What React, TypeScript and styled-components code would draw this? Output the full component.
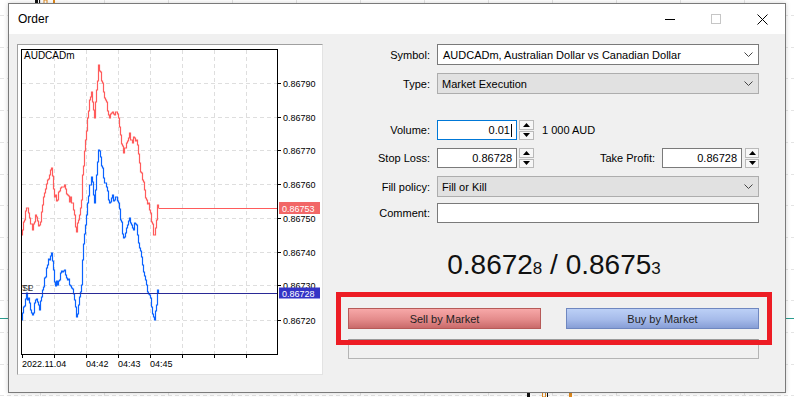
import styled, { createGlobalStyle } from 'styled-components';

const GlobalStyle = createGlobalStyle`
  body {
    margin: 0;
    font-family: 'Liberation Sans', Arial, sans-serif;
    background: #ffffff;
  }
`;

const Desktop = styled.div`
  position: relative;
  width: 794px;
  height: 397px;
  overflow: hidden;
  background: #ffffff;
`;

const Backdrop = styled.svg`
  position: absolute;
  left: 0;
  top: 0;
`;

const Window = styled.div`
  position: absolute;
  left: 8px;
  top: 3px;
  width: 778px;
  height: 390px;
  box-sizing: border-box;
  border: 1px solid #7a7a7a;
  background: #f0f0f0;
  display: flex;
  flex-direction: column;
  box-shadow: 0 0 5px rgba(0, 0, 0, 0.18);
`;

const TitleBar = styled.div`
  height: 30px;
  background: #ffffff;
  display: flex;
  align-items: center;
`;

const Title = styled.div`
  padding-left: 9px;
  font-size: 12px;
  color: #000;
`;

const WindowButtons = styled.div`
  margin-left: auto;
  display: flex;
`;

const WinButton = styled.div`
  width: 46px;
  height: 30px;
  display: flex;
  align-items: center;
  justify-content: center;
`;

const Body = styled.div`
  flex: 1;
  display: flex;
  align-items: flex-start;
  padding: 10px 12px 0 8px;
`;

const ChartPanel = styled.div`
  width: 306px;
  height: 331px;
  box-sizing: border-box;
  background: #ffffff;
  border-top: 1px solid #a0a0a0;
  border-left: 1px solid #a0a0a0;
  border-right: 1px solid #e3e3e3;
  border-bottom: 1px solid #e3e3e3;
  svg {
    display: block;
  }
`;

const FormColumn = styled.div`
  width: 436px;
  margin-left: 13px;
  display: flex;
  flex-direction: column;
  font-size: 11px;
  color: #000;
`;

const FieldRow = styled.div<{ $h: number; $mt: number }>`
  display: grid;
  grid-template-columns: 94px 322px;
  column-gap: 7px;
  height: ${(p) => p.$h}px;
  margin-top: ${(p) => p.$mt}px;
  align-items: center;
`;

const FieldLabel = styled.div`
  text-align: right;
  white-space: nowrap;
`;

const Select = styled.div<{ $variant: 'white' | 'gray' }>`
  height: 100%;
  box-sizing: border-box;
  display: flex;
  align-items: center;
  padding: 0 5px 0 ${(p) => (p.$variant === 'white' ? 5 : 4)}px;
  border: 1px solid ${(p) => (p.$variant === 'white' ? '#7a7a7a' : '#adadad')};
  background: ${(p) => (p.$variant === 'white' ? '#ffffff' : '#e1e1e1')};
  span {
    flex: 1;
  }
`;

const Controls = styled.div`
  display: flex;
  align-items: center;
  height: 100%;
`;

const NumberInput = styled.div<{ $focused?: boolean }>`
  width: 80px;
  height: 20px;
  box-sizing: border-box;
  border: 1px solid ${(p) => (p.$focused ? '#0078d7' : '#7a7a7a')};
  background: #ffffff;
  display: flex;
  align-items: center;
  justify-content: flex-end;
  padding-right: 4px;
`;

const Caret = styled.span`
  display: inline-block;
  width: 1px;
  height: 13px;
  background: #000;
  margin-left: 1px;
`;

const Spinner = styled.div<{ $ml: number; $w: number }>`
  width: ${(p) => p.$w}px;
  height: 20px;
  margin-left: ${(p) => p.$ml}px;
  display: flex;
  flex-direction: column;
  gap: 1px;
`;

const SpinHalf = styled.div`
  flex: 1;
  box-sizing: border-box;
  border: 1px solid #b9b9b9;
  background: #f7f7f7;
  display: flex;
  align-items: center;
  justify-content: center;
`;

const Unit = styled.span`
  margin-left: 8px;
`;

const InlineLabel = styled.span`
  margin-left: auto;
  margin-right: 7px;
`;

const TextInput = styled.div`
  height: 100%;
  box-sizing: border-box;
  border: 1px solid #7a7a7a;
  background: #ffffff;
`;

const PriceQuote = styled.div`
  margin-top: 26px;
  height: 32px;
  line-height: 32px;
  text-align: center;
  font-size: 28px;
  color: #111;
  white-space: nowrap;
  small {
    font-size: 17px;
  }
`;

const ActionArea = styled.div`
  position: relative;
  margin-top: 11px;
  height: 67px;
`;

const ButtonRow = styled.div`
  display: flex;
  justify-content: space-between;
  padding: 16px 13px 0 12px;
`;

const OrderButton = styled.div<{ $side: 'sell' | 'buy' }>`
  width: 193px;
  height: 21px;
  box-sizing: border-box;
  display: flex;
  align-items: center;
  justify-content: center;
  font-size: 11px;
  color: #1f1f1f;
  border: 1px solid ${(p) => (p.$side === 'sell' ? '#b65a58' : '#6f87c0')};
  background: ${(p) =>
    p.$side === 'sell'
      ? 'linear-gradient(#f7a8a8, #e48b8b 55%, #c96a6a)'
      : 'linear-gradient(#bcd0f6, #a6bbea 55%, #879ed6)'};
`;

const StatusBox = styled.div`
  margin: 10px 13px 0 12px;
  height: 20px;
  box-sizing: border-box;
  border: 1px solid #b4b4b4;
  border-top-color: #9a9a9a;
`;

const Highlight = styled.div`
  position: absolute;
  left: 0;
  top: 0;
  right: 0;
  height: 53px;
  box-sizing: border-box;
  border: 5px solid #ed1c24;
  pointer-events: none;
`;

const Chevron = () => (
  <svg width="9" height="5" viewBox="0 0 9 5">
    <polyline points="0.5,0.5 4.5,4.5 8.5,0.5" fill="none" stroke="#444" strokeWidth="1" />
  </svg>
);

const Arrow = ({ up }: { up?: boolean }) => (
  <svg width="7" height="4" viewBox="0 0 7 4">
    <polygon points={up ? '3.5,0 7,4 0,4' : '0,0 7,0 3.5,4'} fill="#000" />
  </svg>
);

const SpinBox = ({ ml, w }: { ml: number; w: number }) => (
  <Spinner $ml={ml} $w={w}>
    <SpinHalf>
      <Arrow up />
    </SpinHalf>
    <SpinHalf>
      <Arrow />
    </SpinHalf>
  </Spinner>
);

// ask price path, key points in page pixels; bid is the same shape 85px lower
const askKeys: [number, number][] = [
  [22, 235], [24, 222], [27, 208], [30, 218], [33, 230], [36, 215], [40, 225], [43, 205],
  [45, 193], [48, 180], [50, 175], [52, 168], [53, 176], [55, 197], [58, 200], [61, 188],
  [65, 185], [68, 195], [72, 203], [75, 215], [77, 232], [79, 220], [82, 200], [83, 175],
  [86, 140], [88, 118], [90, 100], [92, 92], [94, 110], [95, 118], [97, 90], [99, 65],
  [101, 72], [103, 83], [105, 98], [107, 102], [109, 115], [110, 118], [112, 113], [115, 115],
  [117, 112], [119, 118], [121, 135], [124, 153], [126, 148], [127, 143], [130, 133],
  [132, 140], [133, 143], [135, 138], [137, 140], [140, 163], [143, 180], [147, 200],
  [150, 210], [152, 222], [155, 235], [157, 220], [158, 205], [159, 208],
];

// stair-step tick line: each tick moves one pixel right, then jumps vertically
const buildSeries = (offset: number, seed: number) => {
  let s = seed;
  const rnd = () => {
    s = (s * 9301 + 49297) % 233280;
    return s / 233280;
  };
  const pts: string[] = [];
  let prevY = askKeys[0][1] + offset;
  pts.push(`${askKeys[0][0]},${prevY}`);
  for (let i = 0; i < askKeys.length - 1; i++) {
    const [x0, y0] = askKeys[i];
    const [x1, y1] = askKeys[i + 1];
    const steps = Math.max(1, Math.round(x1 - x0));
    for (let k = 1; k <= steps; k++) {
      const t = k / steps;
      const x = x0 + (x1 - x0) * t;
      const jitter = k === steps ? 0 : Math.round((rnd() - 0.5) * 8);
      const y = Math.round(y0 + (y1 - y0) * t + jitter + offset);
      pts.push(`${(x - 0.5).toFixed(1)},${prevY}`);
      pts.push(`${(x - 0.5).toFixed(1)},${y}`);
      pts.push(`${x.toFixed(1)},${y}`);
      prevY = y;
    }
  }
  return pts.join(' ');
};

const priceLevels: [string, number][] = [
  ['0.86790', 83],
  ['0.86780', 117],
  ['0.86770', 150],
  ['0.86760', 184],
  ['0.86750', 218],
  ['0.86740', 252],
  ['0.86730', 285],
  ['0.86720', 320],
];

const timeTicks = [22, 54, 86, 118, 150, 182, 214, 246];
const timeLabels: [string, number][] = [
  ['2022.11.04', 22],
  ['04:42', 86],
  ['04:43', 118],
  ['04:45', 150],
];

const TickChart = () => (
  <svg width="304" height="329" viewBox="18 45 304 329" fontFamily="'Liberation Sans', Arial, sans-serif">
    {priceLevels.map(([, y]) => (
      <line key={y} x1="22" x2="277" y1={y} y2={y} stroke="#dedede" strokeDasharray="4 3" shapeRendering="crispEdges" />
    ))}
    {timeTicks.slice(1).map((x) => (
      <line key={x} x1={x} x2={x} y1="50" y2="354" stroke="#dedede" strokeDasharray="4 3" shapeRendering="crispEdges" />
    ))}
    <text x="24" y="59" fontSize="10" fill="#000">AUDCADm</text>
    <polyline points={buildSeries(0, 11)} fill="none" stroke="#ff5b5b" strokeWidth="1.2" />
    <polyline points={buildSeries(85, 29)} fill="none" stroke="#0a62ff" strokeWidth="1.2" />
    <line x1="159" x2="277" y1="208" y2="208" stroke="#ff5b5b" strokeWidth="1" shapeRendering="crispEdges" />
    <line x1="21" x2="277" y1="293" y2="293" stroke="#2a2a96" strokeWidth="1" shapeRendering="crispEdges" />
    <text x="22" y="291" fontSize="9" fill="#333">SL</text>
    <text x="22" y="291" fontSize="9" fill="#333" opacity="0.8">TP</text>
    <rect x="21.5" y="49.5" width="256" height="305" fill="none" stroke="#000" shapeRendering="crispEdges" />
    {priceLevels.map(([label, y]) => (
      <g key={label}>
        <line x1="277" x2="281" y1={y} y2={y} stroke="#000" shapeRendering="crispEdges" />
        <text x="283" y={y + 3.5} fontSize="9" fill="#000">{label}</text>
      </g>
    ))}
    {timeTicks.map((x) => (
      <line key={x} x1={x} x2={x} y1="354" y2="358" stroke="#000" shapeRendering="crispEdges" />
    ))}
    {timeLabels.map(([label, x]) => (
      <text key={label} x={x} y="367" fontSize="9" fill="#000">{label}</text>
    ))}
    <rect x="279" y="202" width="41" height="12" fill="#f26767" />
    <text x="282" y="211.5" fontSize="9" fill="#fff">0.86753</text>
    <rect x="279" y="287.5" width="41" height="11" fill="#3434c6" />
    <text x="282" y="296.5" fontSize="9" fill="#fff">0.86728</text>
  </svg>
);

const BackgroundChart = () => {
  const rows = Array.from({ length: 13 }, (_, i) => 15 + i * 31.7);
  const cols = Array.from({ length: 13 }, (_, i) => 40 + i * 64);
  return (
    <Backdrop width="794" height="397" viewBox="0 0 794 397">
      <rect width="794" height="397" fill="#ffffff" />
      {rows.map((y) => (
        <line key={y} x1="0" x2="794" y1={Math.round(y)} y2={Math.round(y)} stroke="#e4e4e4" strokeDasharray="4 3" shapeRendering="crispEdges" />
      ))}
      {cols.map((x) => (
        <line key={x} x1={x} x2={x} y1="0" y2="397" stroke="#e4e4e4" strokeDasharray="4 3" shapeRendering="crispEdges" />
      ))}
      <line x1="0" x2="794" y1="318" y2="318" stroke="#2a9d8f" shapeRendering="crispEdges" />
      <rect x="35" y="0" width="3" height="4" fill="#111" />
      <rect x="39" y="0" width="1" height="4" fill="#111" />
      <rect x="44" y="0" width="3" height="4" fill="none" stroke="#e08a1e" />
      <rect x="53" y="0" width="2" height="4" fill="#e08a1e" />
      <rect x="527" y="391" width="3" height="6" fill="#111" />
      <rect x="542.5" y="391" width="3" height="6" fill="none" stroke="#e08a1e" />
      <rect x="547" y="392" width="1" height="5" fill="#111" />
      <rect x="569" y="391" width="3" height="6" fill="#e08a1e" />
    </Backdrop>
  );
};

const App = () => {
  return (
    <>
      <GlobalStyle />
      <Desktop>
        <BackgroundChart />
        <Window>
          <TitleBar>
            <Title>Order</Title>
            <WindowButtons>
              <WinButton>
                <svg width="10" height="10" viewBox="0 0 10 10">
                  <line x1="0" x2="10" y1="5.5" y2="5.5" stroke="#000" />
                </svg>
              </WinButton>
              <WinButton>
                <svg width="10" height="10" viewBox="0 0 10 10">
                  <rect x="0.5" y="0.5" width="9" height="9" fill="none" stroke="#c6c6c6" />
                </svg>
              </WinButton>
              <WinButton>
                <svg width="11" height="11" viewBox="0 0 11 11">
                  <path d="M0.5 0.5 L10.5 10.5 M10.5 0.5 L0.5 10.5" stroke="#000" strokeWidth="1" />
                </svg>
              </WinButton>
            </WindowButtons>
          </TitleBar>
          <Body>
            <ChartPanel>
              <TickChart />
            </ChartPanel>
            <FormColumn>
              <FieldRow $h={21} $mt={0}>
                <FieldLabel>Symbol:</FieldLabel>
                <Select $variant="white">
                  <span>AUDCADm, Australian Dollar vs Canadian Dollar</span>
                  <Chevron />
                </Select>
              </FieldRow>
              <FieldRow $h={21} $mt={8}>
                <FieldLabel>Type:</FieldLabel>
                <Select $variant="gray">
                  <span>Market Execution</span>
                  <Chevron />
                </Select>
              </FieldRow>
              <FieldRow $h={20} $mt={26}>
                <FieldLabel>Volume:</FieldLabel>
                <Controls>
                  <NumberInput $focused>
                    0.01
                    <Caret />
                  </NumberInput>
                  <SpinBox ml={2} w={15} />
                  <Unit>1 000 AUD</Unit>
                </Controls>
              </FieldRow>
              <FieldRow $h={20} $mt={8}>
                <FieldLabel>Stop Loss:</FieldLabel>
                <Controls>
                  <NumberInput>0.86728</NumberInput>
                  <SpinBox ml={2} w={15} />
                  <InlineLabel>Take Profit:</InlineLabel>
                  <NumberInput>0.86728</NumberInput>
                  <SpinBox ml={3} w={14} />
                </Controls>
              </FieldRow>
              <FieldRow $h={21} $mt={8}>
                <FieldLabel>Fill policy:</FieldLabel>
                <Select $variant="gray">
                  <span>Fill or Kill</span>
                  <Chevron />
                </Select>
              </FieldRow>
              <FieldRow $h={20} $mt={6}>
                <FieldLabel>Comment:</FieldLabel>
                <TextInput />
              </FieldRow>
              <PriceQuote>
                0.8672<small>8</small> / 0.8675<small>3</small>
              </PriceQuote>
              <ActionArea>
                <ButtonRow>
                  <OrderButton $side="sell">Sell by Market</OrderButton>
                  <OrderButton $side="buy">Buy by Market</OrderButton>
                </ButtonRow>
                <StatusBox />
                <Highlight />
              </ActionArea>
            </FormColumn>
          </Body>
        </Window>
      </Desktop>
    </>
  );
};

export default App;
